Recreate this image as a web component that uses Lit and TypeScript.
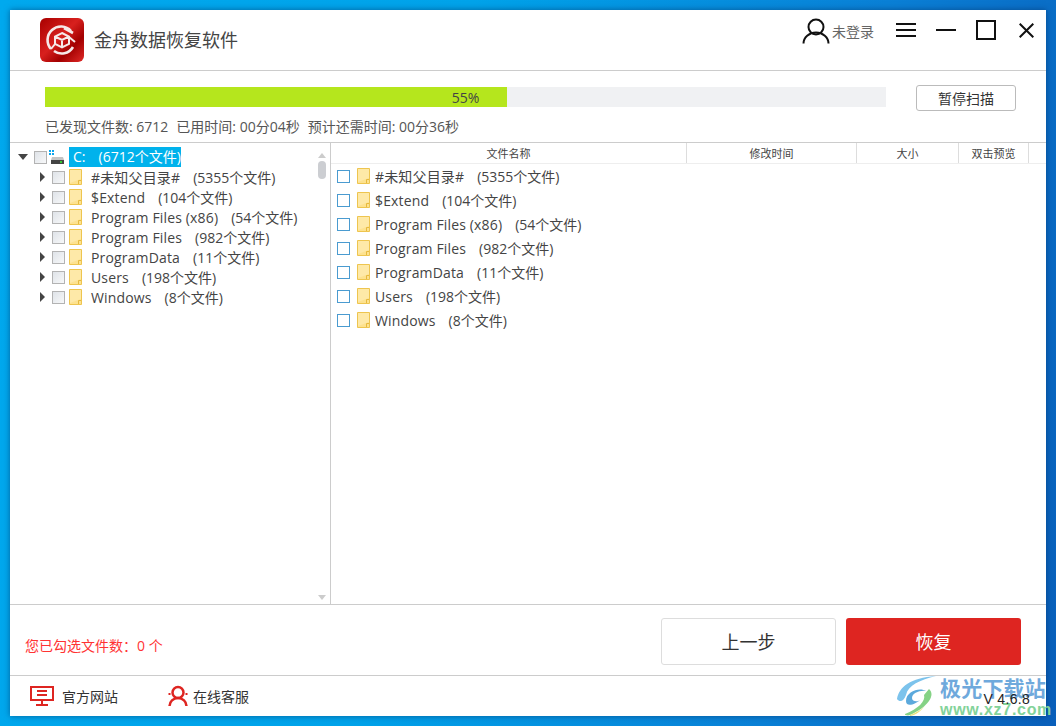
import { LitElement, html, css } from "lit";
import { customElement } from "lit/decorators.js";

const rows = [
  ["#未知父目录#", "(5355个文件)"],
  ["$Extend", "(104个文件)"],
  ["Program Files (x86)", "(54个文件)"],
  ["Program Files", "(982个文件)"],
  ["ProgramData", "(11个文件)"],
  ["Users", "(198个文件)"],
  ["Windows", "(8个文件)"],
];

const folder = html`<svg class="folder" width="13" height="16" viewBox="0 0 13 16">
  <path d="M.5.5H12.5V15.500H.5Z" fill="#fde28f" stroke="#eec54f"/>
  <path d="M1 1H12V10L1 14Z" fill="#fee9a8"/>
  <path d="M9.500 15V11.500H12" fill="#fde28f" stroke="#e6b93f"/>
</svg>`;

@customElement("app-root")
export class AppRoot extends LitElement {
  static styles = css`
    :host {
      display: block; width: 1056px; height: 726px; box-sizing: border-box; padding: 10px;
      overflow: hidden; position: relative;
      background: linear-gradient(100deg, #00a9ee 0%, #00a3ea 40%, #0a80d6 75%, #0a5fba 100%);
      font-family: "Open Sans", "Noto Sans CJK SC", sans-serif; color: #333;
    }
    .win { width: 1036px; height: 706px; background: #fff; display: flex; flex-direction: column; box-shadow: 0 0 6px rgba(0,40,90,.55); }
    .head { height: 60px; flex: none; display: flex; align-items: center; border-bottom: 1px solid #ccc; padding: 0 12px 0 30px; }
    .logo { width: 44px; height: 44px; margin-right: 10px; flex: none; margin-top: -1px; }
    .title { font-size: 18px; color: #444; flex: 1; margin-top: -3px; }
    .user { display: flex; align-items: center; font-size: 14px; color: #666; margin-right: 22px; margin-top: -19px; gap: 2px; }
    .ctl { display: flex; align-items: center; gap: 20px; margin-top: -20px; }
    .ctl .x { margin-left: 3px; }
    .prog { height: 71px; flex: none; border-bottom: 1px solid #ccc; padding: 0 30px 0 35px; }
    .prog-top { display: flex; align-items: flex-start; padding-top: 16px; }
    .bar { width: 841px; height: 20px; background: #f0f1f3; position: relative; display: flex; }
    .fill { background: #b5e61d; }
    .pct { position: absolute; inset: 0; display: flex; align-items: center; justify-content: center; font-size: 14px; color: #444; }
    .pause { margin-left: 30px; width: 100px; height: 26px; box-sizing: border-box; border: 1px solid #bbb; border-radius: 3px; font-size: 14px; color: #333; display: flex; align-items: center; justify-content: center; margin-top: -2px; }
    .stats { font-size: 14px; color: #555; margin-top: 7px; line-height: 18px; display: flex; gap: 8px; white-space: pre; }
    .main { flex: 1; display: flex; min-height: 0; border-bottom: 1px solid #ccc; }
    .tree { flex: none; border-right: 1px solid #ccc; position: relative; padding: 4px 0 0 8px; width: 312px; }
    .t { display: flex; align-items: center; height: 20px; font-size: 14px; color: #444; white-space: pre; }
    .t.child { padding-left: 17px; }
    .cb { width: 13px; height: 13px; box-sizing: border-box; border: 1px solid #b3b3b3; background: linear-gradient(135deg, #dfe3e8, #f7f8f9); margin: 0 4px 0 0; flex: none; }
    .arr { width: 14px; flex: none; display: flex; justify-content: center; }
    .arr.root { width: 10px; margin-right: 6px; }
    .cb.root { margin-right: 2px; }
    .sel { background: #00b2ec; color: #fff; height: 20px; line-height: 20px; padding: 0 0 0 4px; margin-left: 4px; width: 112px; box-sizing: border-box; }
    .cb.kid { margin-left: 3px; }
    .name { margin-left: 9px; letter-spacing: .15px; }
    .gap { margin-left: 13px; }
    .sb { position: absolute; right: 0; top: 0; bottom: 0; width: 16px; display: flex; flex-direction: column; align-items: center; padding-top: 10px; box-sizing: border-box; }
    .thumb { width: 8px; height: 18px; background: #ccced2; border-radius: 4px; margin-top: 3px; }
    .tri-up { width: 0; height: 0; border: 4px solid transparent; border-bottom: 5px solid #ccc; border-top: 0; }
    .tri-dn { position: absolute; bottom: 4px; width: 0; height: 0; border: 4px solid transparent; border-top: 5px solid #ccc; border-bottom: 0; }
    .list { flex: 1; display: flex; flex-direction: column; min-width: 0; }
    .cols { height: 21px; flex: none; display: flex; font-size: 11px; color: #444; border-bottom: 1px solid #eee; box-sizing: border-box; }
    .cols div { display: flex; align-items: center; justify-content: center; border-right: 1px solid #ddd; box-sizing: border-box; }
    .c1 { width: 356px; } .c2 { width: 170px; } .c3 { width: 102px; } .c4 { width: 70px; }
    .r { display: flex; align-items: center; height: 24px; font-size: 14px; color: #444; white-space: pre; padding-left: 6px; }
    .r .cb2 { width: 13px; height: 13px; box-sizing: border-box; border: 1px solid #4a9bd0; background: #fff; margin-right: 7px; flex: none; }
    .r .name { margin-left: 5px; }
    .actions { height: 70px; flex: none; display: flex; align-items: center; border-bottom: 1px solid #ccc; padding-right: 25px; padding-left: 15px; }
    .count { flex: 1; color: #f33; font-size: 14px; margin-top: 10px; }
    .btn { width: 175px; height: 47px; box-sizing: border-box; border-radius: 3px; display: flex; align-items: center; justify-content: center; font-size: 18px; margin-top: 2px; }
    .back { border: 1px solid #ddd; color: #333; margin-right: 10px; }
    .go { background: #de2521; color: #fff; }
    .foot { height: 40px; flex: none; display: flex; align-items: center; padding-left: 20px; font-size: 14px; color: #333; position: relative; }
    .lnk { display: flex; align-items: center; gap: 8px; }
    .l1 { width: 138px; }
    .l2 { gap: 5px; }
    .ver { position: absolute; right: 16px; top: 15px; font-family: "Liberation Sans", sans-serif; font-size: 14px; color: #222; letter-spacing: .3px; }
    .wm { position: absolute; left: 886px; top: -1px; width: 150px; height: 41px; }
    .wm svg { position: absolute; left: 0; top: 0; }
    .wm1 { position: absolute; left: 44px; top: 1px; font-size: 21px; font-weight: 700; color: #6fa9dc; white-space: pre; line-height: 24px; letter-spacing: .2px; }
    .wm2 { position: absolute; left: 44px; top: 28px; font-size: 16px; font-weight: 700; color: #83d39a; white-space: pre; line-height: 13px; font-family: "Liberation Sans", sans-serif; letter-spacing: .7px; }
  `;

  render() {
    return html`<div class="win">
      <div class="head">
        <svg class="logo" viewBox="0 0 44 44">
          <defs><linearGradient id="lg" x1="0" y1="0" x2="1" y2="1"><stop offset="0" stop-color="#a80000"/><stop offset=".45" stop-color="#d8201e"/><stop offset=".7" stop-color="#a20000"/><stop offset="1" stop-color="#e02a28"/></linearGradient></defs>
          <rect width="44" height="44" rx="6" fill="url(#lg)"/>
          <path d="M11 31A13 13 0 0 1 31 13M33 15L24 10M33 29A13 13 0 0 1 14 33" fill="none" stroke="#f6e9e9" stroke-width="2.6"/>
          <path d="M22 15L29 18.500V26L22 29.500L15 26V18.500ZM15 18.500L22 22L29 18.500M22 22V29.500" fill="none" stroke="#f6e9e9" stroke-width="2"/>
          <path d="M11 31L15 26M29 19L35 24" fill="none" stroke="#f6e9e9" stroke-width="2"/>
        </svg>
        <div class="title">金舟数据恢复软件</div>
        <div class="user">
          <svg width="28" height="26" viewBox="0 0 28 26"><circle cx="14" cy="9" r="7.500" fill="none" stroke="#111" stroke-width="2"/><path d="M1.500 25.500A12.500 11 0 0 1 26.500 25.500" fill="none" stroke="#111" stroke-width="2"/></svg>
          <span>未登录</span>
        </div>
        <div class="ctl">
          <svg width="20" height="14" viewBox="0 0 20 14"><path d="M0 1H20M0 7H20M0 13H20" stroke="#111" stroke-width="2"/></svg>
          <svg width="20" height="14" viewBox="0 0 20 14"><path d="M0 7H20" stroke="#111" stroke-width="2"/></svg>
          <svg width="20" height="20" viewBox="0 0 20 20"><rect x="1" y="1" width="18" height="18" fill="none" stroke="#111" stroke-width="2"/></svg>
          <svg class="x" width="15" height="15" viewBox="0 0 15 15"><path d="M.7.7L14.300 14.300M14.300.7L.7 14.300" stroke="#111" stroke-width="2"/></svg>
        </div>
      </div>
      <div class="prog">
        <div class="prog-top">
          <div class="bar"><div class="fill" style="width:462px"></div><div class="pct">55%</div></div>
          <div class="pause">暂停扫描</div>
        </div>
        <div class="stats"><span>已发现文件数: 6712</span><span>已用时间: 00分04秒</span><span>预计还需时间: 00分36秒</span></div>
      </div>
      <div class="main">
        <div class="tree">
          <div class="t">
            <span class="arr root"><svg width="10" height="6" viewBox="0 0 10 6"><path d="M0 0H10L5 6Z" fill="#444"/></svg></span>
            <span class="cb root"></span>
            <svg width="16" height="14" viewBox="0 0 16 14">
              <path d="M0 0H2V2H0ZM3 0H5V2H3ZM0 3H2V5H0ZM3 3H5V5H3Z" fill="#0aa6ee"/>
              <path d="M3 7H14L15 10H2Z" fill="#c4c4c4"/><rect x="2" y="10" width="13" height="4" fill="#444"/><rect x="11" y="11" width="2" height="2" fill="#3c3"/>
            </svg>
            <span class="sel">C:<span class="gap">(6712个文件)</span></span>
          </div>
          ${rows.map(([n, c]) => html`<div class="t child">
            <span class="arr"><svg width="5" height="10" viewBox="0 0 5 10"><path d="M0 0L5 5L0 10Z" fill="#444"/></svg></span>
            <span class="cb kid"></span>
            ${folder}
            <span class="name">${n}</span><span class="gap">${c}</span>
          </div>`)}
          <div class="sb"><div class="tri-up"></div><div class="thumb"></div><div class="tri-dn"></div></div>
        </div>
        <div class="list">
          <div class="cols">
            <div class="c1">文件名称</div>
            <div class="c2">修改时间</div>
            <div class="c3">大小</div>
            <div class="c4">双击预览</div>
          </div>
          <div class="rows">
            ${rows.map(([n, c]) => html`<div class="r"><span class="cb2"></span>${folder}<span class="name">${n}</span><span class="gap">${c}</span></div>`)}
          </div>
        </div>
      </div>
      <div class="actions">
        <div class="count">您已勾选文件数：0 个</div>
        <div class="btn back">上一步</div>
        <div class="btn go">恢复</div>
      </div>
      <div class="foot">
        <div class="lnk l1">
          <svg width="24" height="20" viewBox="0 0 24 20"><rect x="1" y="1" width="22" height="13" fill="none" stroke="#de2521" stroke-width="2"/><path d="M7 5H17M7 9H17M12 14V18M6 19H18" stroke="#de2521" stroke-width="2"/></svg>
          <span>官方网站</span>
        </div>
        <div class="lnk l2">
          <svg width="20" height="22" viewBox="0 0 20 22"><circle cx="10" cy="7.500" r="5.500" fill="none" stroke="#de2521" stroke-width="2.500"/><path d="M1.500 21A8.500 8 0 0 1 18.500 21" fill="none" stroke="#de2521" stroke-width="2.500"/><path d="M1.500 8V10M18.500 8V10" stroke="#de2521" stroke-width="2"/></svg>
          <span>在线客服</span>
        </div>
        <div class="wm">
          <svg width="44" height="41" viewBox="0 0 44 41">
            <path d="M1 24C3 12 14 3 40 1C24 5 12 10 10 20C8 26 4 28 1 24Z" fill="#7cc3ec"/>
            <path d="M10 26C10 16 24 12 30 16C24 15 16 18 16 23C16 27 22 27 24 25C20 29 10 33 10 26Z" fill="#5ca9dc"/>
            <path d="M33 14C40 20 32 32 14 40C12 41 8 40 9 39C22 34 30 26 28 20Z" fill="#85d285"/>
            <path d="M14 40C20 38 26 34 29 31C25 36 20 40 14 41Z" fill="#ece27a"/>
          </svg>
          <div class="wm1">极光下载站</div>
          <div class="wm2">www.xz7.com</div>
        </div>
        <div class="ver">V 4.6.8</div>
      </div>
    </div>`;
  }
}
